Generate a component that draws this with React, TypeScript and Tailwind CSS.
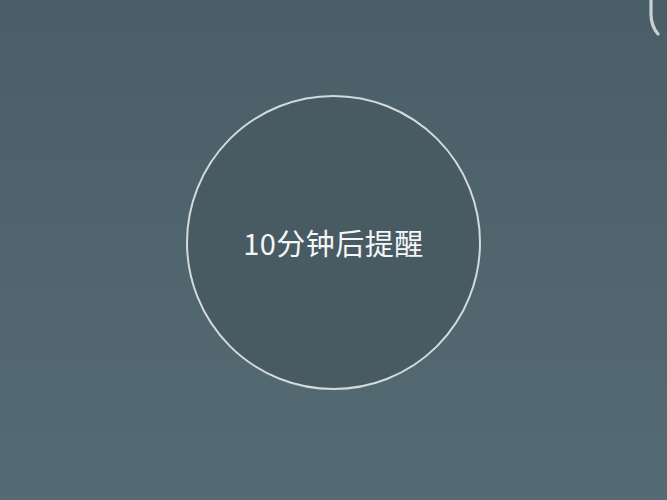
export default function App() {
  return (
    <div
      className="relative flex h-[500px] w-[667px] items-center justify-center overflow-hidden bg-gradient-to-b from-[#4a5e67] to-[#556b73] pb-[16px]"
      style={{ fontFamily: '"Noto Sans CJK SC", "Noto Sans", sans-serif' }}
    >
      {/* reminder circle */}
      <div className="flex h-[295px] w-[295px] items-center justify-center rounded-full border-2 border-[#d3dadc] bg-[#485b63]">
        <span className="text-[29px] font-normal leading-none tracking-[0.5px] text-[#f4f6f7]">10分钟后提醒</span>
      </div>

      {/* partial spinner arc, top right */}
      <svg className="absolute right-0 top-0" width="30" height="45" viewBox="0 0 30 45">
        <path
          d="M14 -4 L14 14 Q14 26 21 34"
          fill="none"
          stroke="#c9d1d4"
          strokeWidth="3.2"
          strokeLinecap="round"
        />
      </svg>
    </div>
  )
}
